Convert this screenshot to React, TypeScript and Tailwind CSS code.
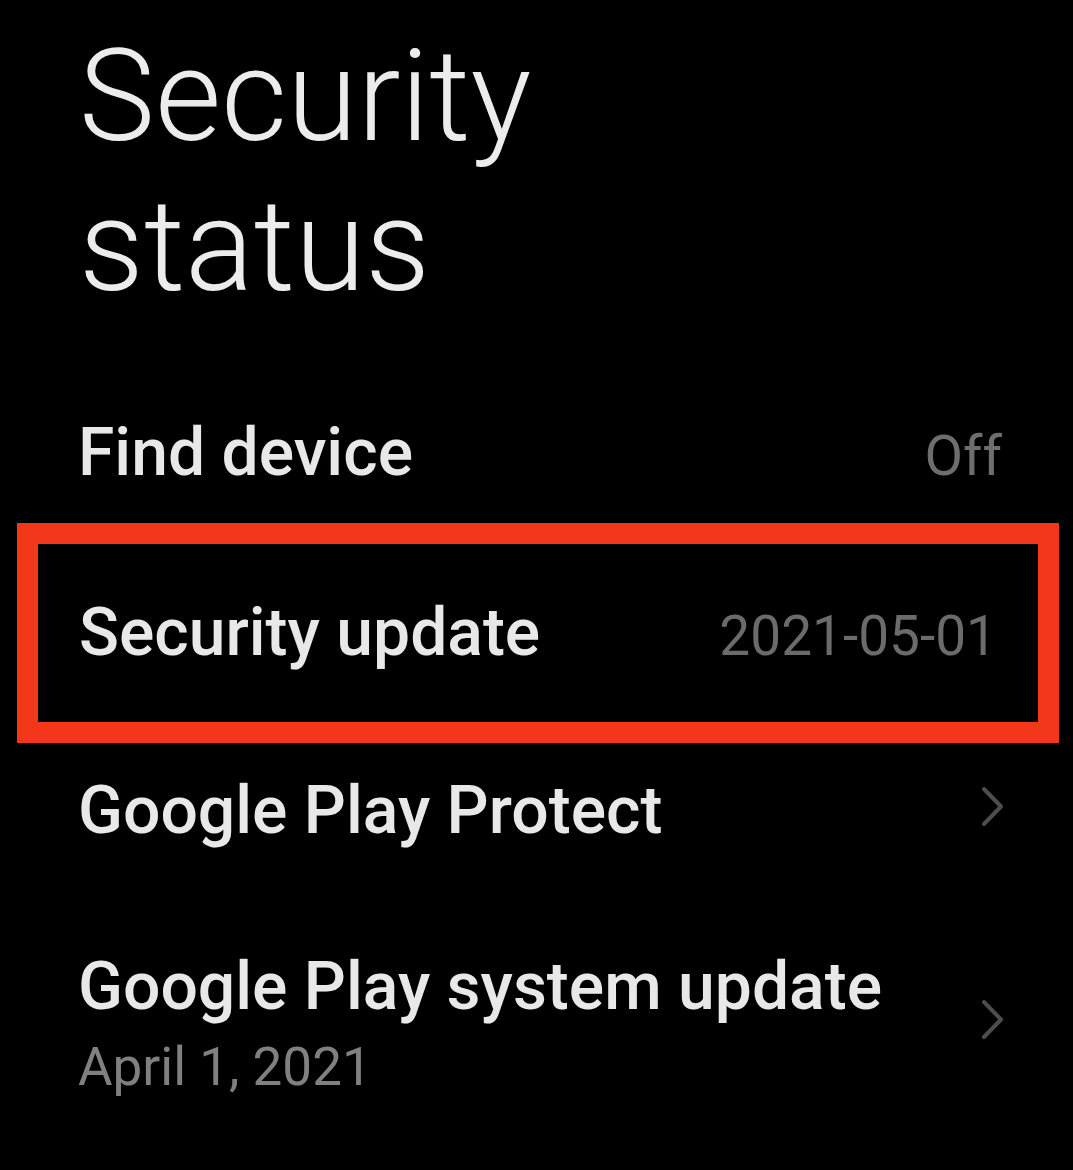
import React from "react";

function Chevron() {
  return (
    <svg width="24" height="41" viewBox="0 0 24 41" fill="none">
      <path d="M4 3 L21 20.5 L4 38" stroke="#4d4d4d" strokeWidth="4" strokeLinecap="round" strokeLinejoin="round" />
    </svg>
  );
}

export default function App() {
  return (
    <div className="w-[1073px] h-[1170px] bg-black overflow-hidden font-['Roboto','Liberation_Sans',sans-serif] text-[#e8e8e8]">
      <div className="pl-[79px] pt-[21px] text-[128px] leading-[150px] font-light text-[#ececec]">
        <div>Security</div>
        <div>status</div>
      </div>

      <div className="flex items-baseline justify-between h-[202px] pt-[94px] pl-[78px] pr-[71px]">
        <span className="text-[66px] leading-[75px] font-medium">Find device</span>
        <span className="text-[56px] leading-[66px] text-[#6e6e6e]">Off</span>
      </div>

      <div className="ml-[17px] mr-[14px] h-[220px] border-[21px] border-[#f4361a] pt-[51px] pl-[41px] pr-[41px]">
        <div className="flex items-baseline justify-between">
          <span className="text-[66px] leading-[75px] font-medium">Security update</span>
          <span className="text-[55px] leading-[66px] text-[#6b6b6b]">2021-05-01</span>
        </div>
      </div>

      <div className="flex items-center justify-between h-[134px] pl-[78px] pr-[69px]">
        <span className="text-[66px] leading-[75px] font-medium">Google Play Protect</span>
        <span className="pb-[8px]"><Chevron /></span>
      </div>

      <div className="flex items-center justify-between pt-[72px] pl-[78px] pr-[69px]">
        <div className="flex flex-col">
          <span className="text-[66px] leading-[75px] font-medium">Google Play system update</span>
          <span className="mt-[10px] text-[53px] leading-[66px] text-[#808080]">April 1, 2021</span>
        </div>
        <span className="pb-[10px]"><Chevron /></span>
      </div>
    </div>
  );
}
